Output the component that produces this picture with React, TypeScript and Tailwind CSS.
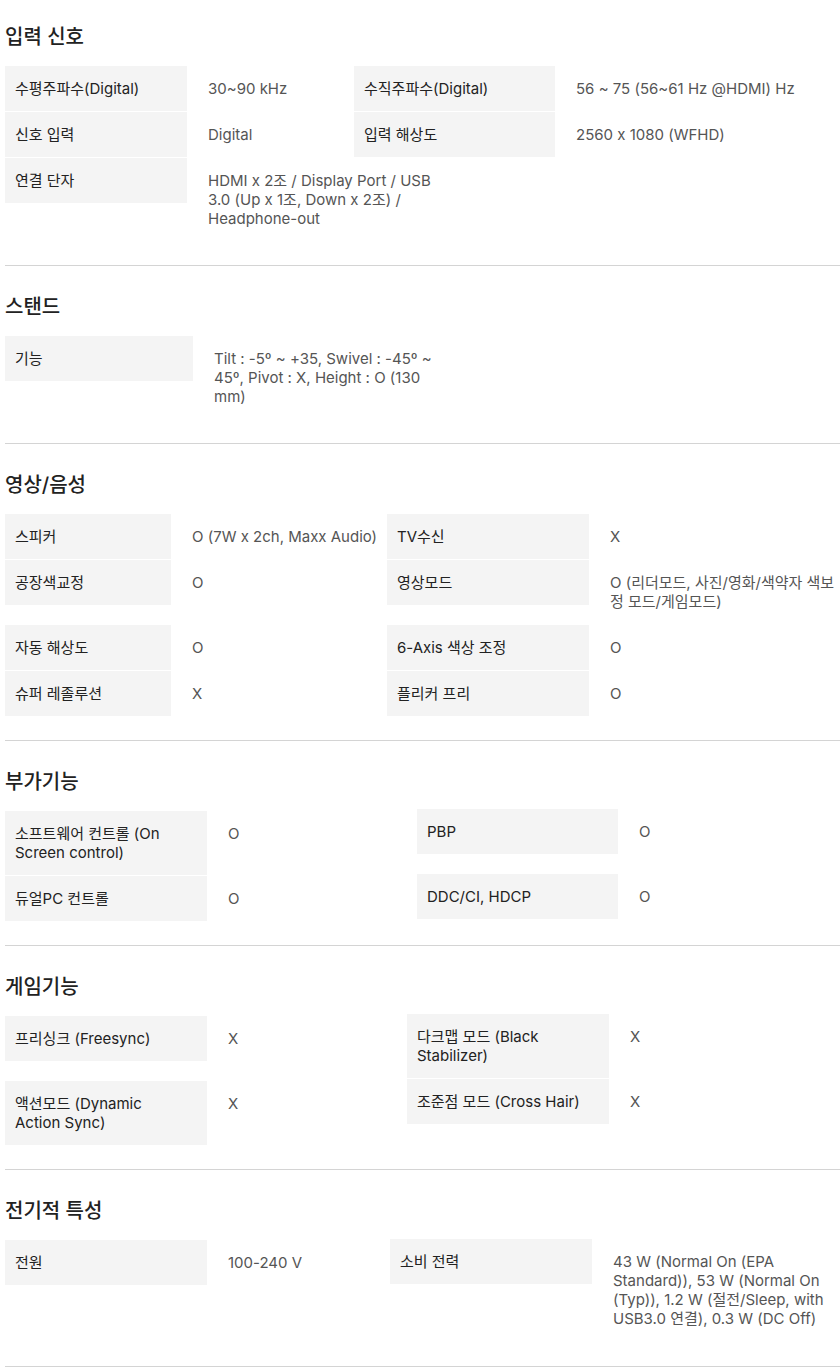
import { Fragment, type ReactNode } from "react";
import clsx from "clsx";

type Pair = { label: ReactNode; value: ReactNode };

function SpecSection({
  title,
  grid,
  rows,
  first = false,
  shift = "",
}: {
  title: string;
  grid: string;
  rows: Pair[][];
  first?: boolean;
  shift?: string;
}) {
  return (
    <section
      className={clsx(
        "border-b border-[#d4d4d4] pb-[24px]",
        first ? "pt-[23px]" : "pt-[27px]"
      )}
    >
      <h2 className="mb-[15px] text-[20px] font-medium leading-[28px] text-[#222]">
        {title}
      </h2>
      <div className={clsx("grid items-start gap-y-[1px]", grid)}>
        {rows.map((row, i) =>
          row.map((cell, j) => (
            <Fragment key={`${i}-${j}`}>
              <div
                className={clsx(
                  "bg-[#f4f4f4] px-[10px] py-[13px] text-[#222]",
                  j === 1 && shift
                )}
              >
                {cell.label}
              </div>
              <div
                className={clsx(
                  "whitespace-nowrap pb-[13px] pl-[21px] pt-[13px] text-[#555]",
                  j === 1 && shift
                )}
              >
                {cell.value}
              </div>
            </Fragment>
          ))
        )}
      </div>
    </section>
  );
}

export default function App() {
  return (
    <div className="min-h-[1372px] overflow-hidden bg-white pl-[5px] font-['Inter','Noto_Sans_CJK_KR',sans-serif] text-[15px] leading-[19px] [font-feature-settings:'calt'_0]">
      <SpecSection
        first
        title="입력 신호"
        grid="grid-cols-[182px_167px_201px_1fr]"
        rows={[
          [
            { label: "수평주파수(Digital)", value: "30~90 kHz" },
            { label: "수직주파수(Digital)", value: "56 ~ 75 (56~61 Hz @HDMI) Hz" },
          ],
          [
            { label: "신호 입력", value: "Digital" },
            { label: "입력 해상도", value: "2560 x 1080 (WFHD)" },
          ],
          [
            {
              label: "연결 단자",
              value: (
                <>
                  HDMI x 2조 / Display Port / USB
                  <br />
                  3.0 (Up x 1조, Down x 2조) /
                  <br />
                  Headphone-out
                </>
              ),
            },
          ],
        ]}
      />

      <SpecSection
        title="스탠드"
        grid="grid-cols-[188px_1fr]"
        rows={[
          [
            {
              label: "기능",
              value: (
                <>
                  Tilt : -5º ~ +35, Swivel : -45º ~
                  <br />
                  45º, Pivot : X, Height : O (130
                  <br />
                  mm)
                </>
              ),
            },
          ],
        ]}
      />

      <SpecSection
        title="영상/음성"
        grid="grid-cols-[166px_216px_202px_1fr]"
        rows={[
          [
            { label: "스피커", value: "O (7W x 2ch, Maxx Audio)" },
            { label: "TV수신", value: "X" },
          ],
          [
            { label: "공장색교정", value: "O" },
            {
              label: "영상모드",
              value: (
                <>
                  O (리더모드, 사진/영화/색약자 색보
                  <br />
                  정 모드/게임모드)
                </>
              ),
            },
          ],
          [
            { label: "자동 해상도", value: "O" },
            { label: "6-Axis 색상 조정", value: "O" },
          ],
          [
            { label: "슈퍼 레졸루션", value: "X" },
            { label: "플리커 프리", value: "O" },
          ],
        ]}
      />

      <SpecSection
        title="부가기능"
        grid="grid-cols-[202px_210px_201px_1fr]"
        shift="-mt-[2px] mb-[2px]"
        rows={[
          [
            {
              label: (
                <>
                  소프트웨어 컨트롤 (On
                  <br />
                  Screen control)
                </>
              ),
              value: "O",
            },
            { label: "PBP", value: "O" },
          ],
          [
            { label: "듀얼PC 컨트롤", value: "O" },
            { label: "DDC/CI, HDCP", value: "O" },
          ],
        ]}
      />

      <SpecSection
        title="게임기능"
        grid="grid-cols-[202px_200px_202px_1fr]"
        shift="-mt-[2px] mb-[2px]"
        rows={[
          [
            { label: "프리싱크 (Freesync)", value: "X" },
            {
              label: (
                <>
                  다크맵 모드 (Black
                  <br />
                  Stabilizer)
                </>
              ),
              value: "X",
            },
          ],
          [
            {
              label: (
                <>
                  액션모드 (Dynamic
                  <br />
                  Action Sync)
                </>
              ),
              value: "X",
            },
            { label: "조준점 모드 (Cross Hair)", value: "X" },
          ],
        ]}
      />

      <SpecSection
        title="전기적 특성"
        grid="grid-cols-[202px_183px_202px_1fr]"
        shift="-mt-[1px] mb-[1px]"
        rows={[
          [
            { label: "전원", value: "100-240 V" },
            {
              label: "소비 전력",
              value: (
                <>
                  43 W (Normal On (EPA
                  <br />
                  Standard)), 53 W (Normal On
                  <br />
                  (Typ)), 1.2 W (절전/Sleep, with
                  <br />
                  USB3.0 연결), 0.3 W (DC Off)
                </>
              ),
            },
          ],
        ]}
      />
    </div>
  );
}
